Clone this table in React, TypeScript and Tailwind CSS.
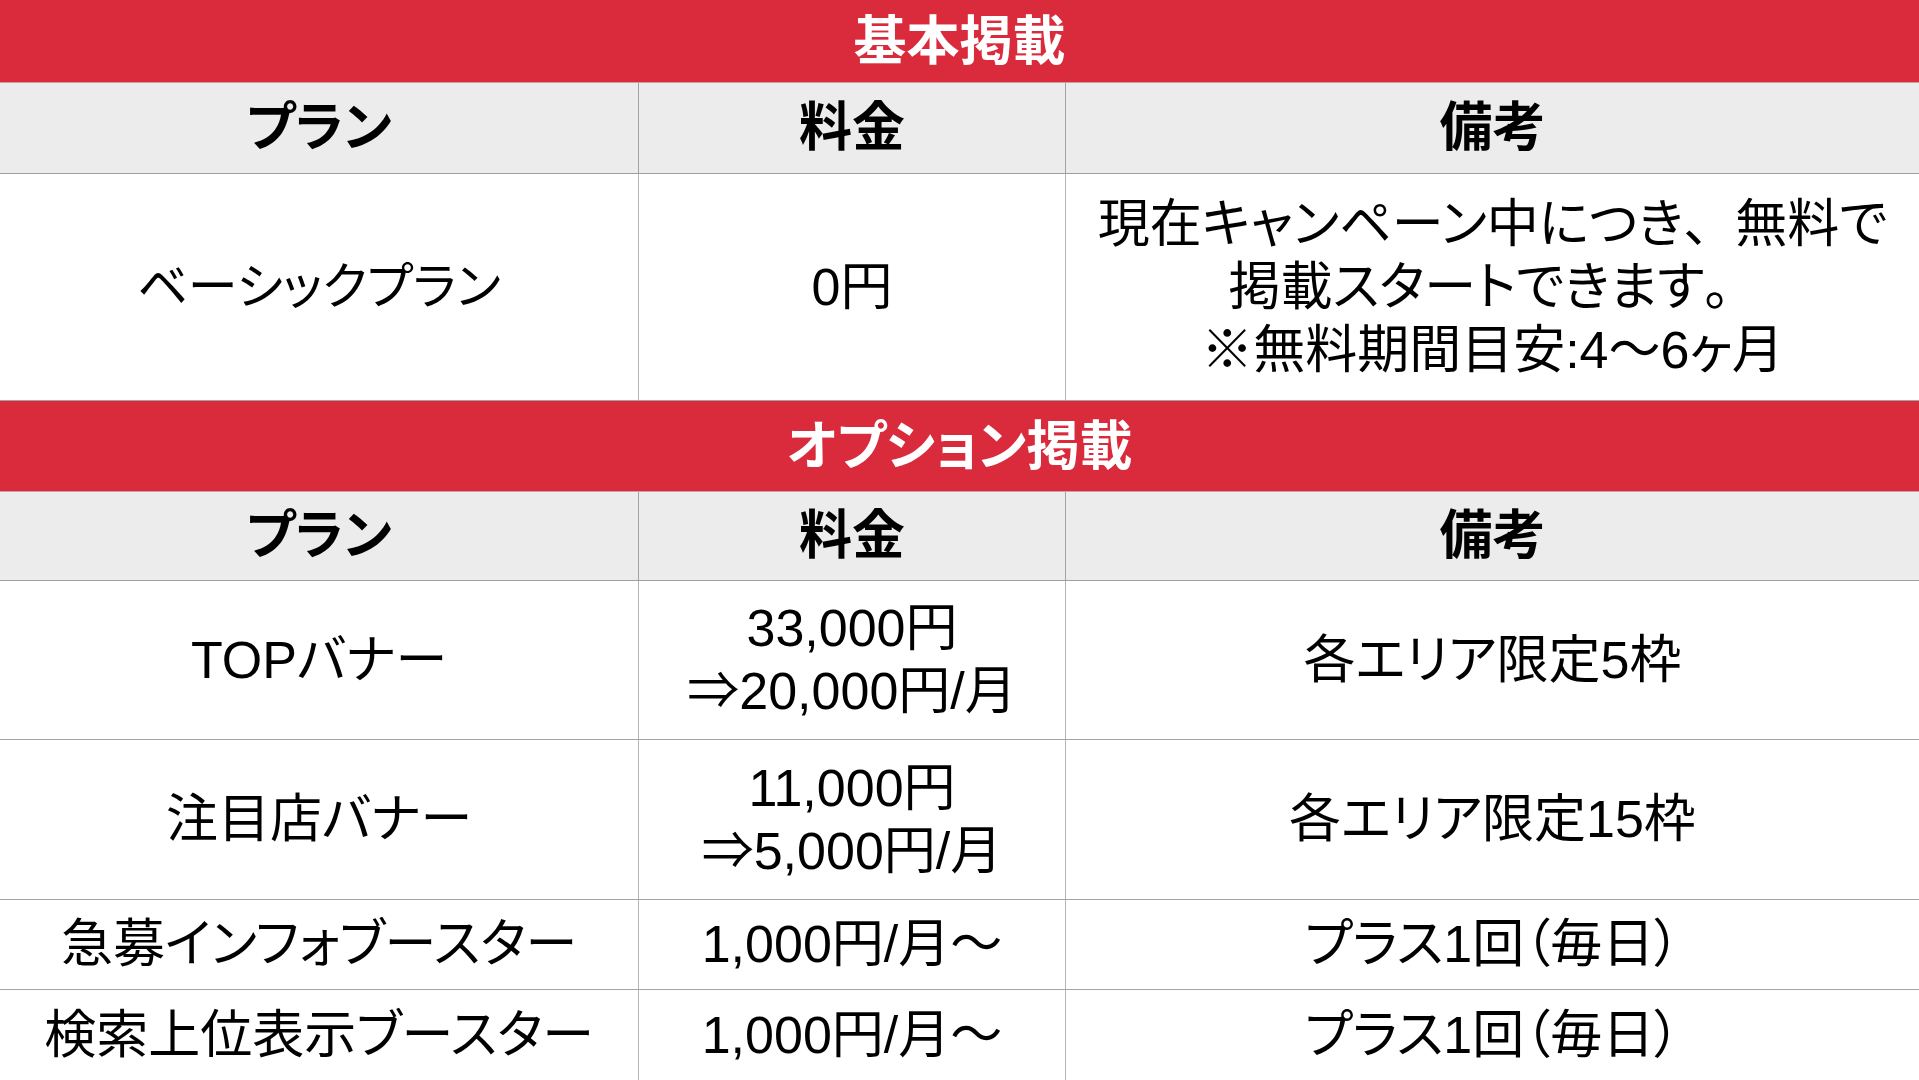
import * as React from "react";

const font = "font-['Liberation_Sans','Noto_Sans_CJK_JP',sans-serif] [font-feature-settings:'palt']";

const cols = "grid grid-cols-[639px_427px_1fr]";

const SectionBar = ({ title, h }: { title: string; h: string }) => (
  <div className={`${h} flex items-center justify-center bg-[#d92b3c] border-b border-[#c9a0a4]`}>
    <span className="text-white font-bold text-[53px] leading-none">{title}</span>
  </div>
);

const HeaderRow = ({ h }: { h: string }) => (
  <div className={`${cols} ${h} bg-[#ececec] border-b border-[#9f9f9f]`}>
    <div className="flex items-center justify-center border-r border-[#a3a3a3] font-bold text-[53px]">プラン</div>
    <div className="flex items-center justify-center border-r border-[#a3a3a3] font-bold text-[53px]">料金</div>
    <div className="flex items-center justify-center font-bold text-[53px]">備考</div>
  </div>
);

const Row = ({
  h,
  plan,
  price,
  note,
  last,
}: {
  h: string;
  plan: React.ReactNode;
  price: React.ReactNode;
  note: React.ReactNode;
  last?: boolean;
}) => (
  <div className={`${cols} ${h} ${last ? "" : "border-b border-[#a3a3a3]"}`}>
    <div className="flex items-center justify-center text-center border-r border-[#b5b5b5] leading-[63px]">{plan}</div>
    <div className="flex items-center justify-center text-center border-r border-[#b5b5b5] leading-[63px]">{price}</div>
    <div className="flex items-center justify-center text-center leading-[63px]">{note}</div>
  </div>
);

export default function App() {
  return (
    <div className={`${font} w-[1919px] h-[1080px] overflow-hidden bg-white text-black text-[52px]`}>
      {/* 基本掲載 */}
      <SectionBar title="基本掲載" h="h-[83px]" />
      <HeaderRow h="h-[91px]" />
      <Row
        h="h-[227px]"
        plan={<span className="text-[50px]">ベーシックプラン</span>}
        price="0円"
        note={
          <span>
            現在キャンペーン中につき<span className="[font-feature-settings:normal]">、</span>無料で
            <br />
            掲載スタートできます<span className="[font-feature-settings:normal]">。</span>
            <br />
            ※無料期間目安:4～6ヶ月
          </span>
        }
      />

      {/* オプション掲載 */}
      <SectionBar title="オプション掲載" h="h-[91px]" />
      <HeaderRow h="h-[89px]" />
      <Row
        h="h-[159px]"
        plan="TOPバナー"
        price={
          <span>
            33,000円
            <br />
            ⇒20,000円/月
          </span>
        }
        note="各エリア限定5枠"
      />
      <Row
        h="h-[160px]"
        plan="注目店バナー"
        price={
          <span>
            11,000円
            <br />
            ⇒5,000円/月
          </span>
        }
        note="各エリア限定15枠"
      />
      <Row h="h-[90px]" plan="急募インフォブースター" price="1,000円/月～" note="プラス1回（毎日）" />
      <Row h="h-[90px]" plan="検索上位表示ブースター" price="1,000円/月～" note="プラス1回（毎日）" last />
    </div>
  );
}
